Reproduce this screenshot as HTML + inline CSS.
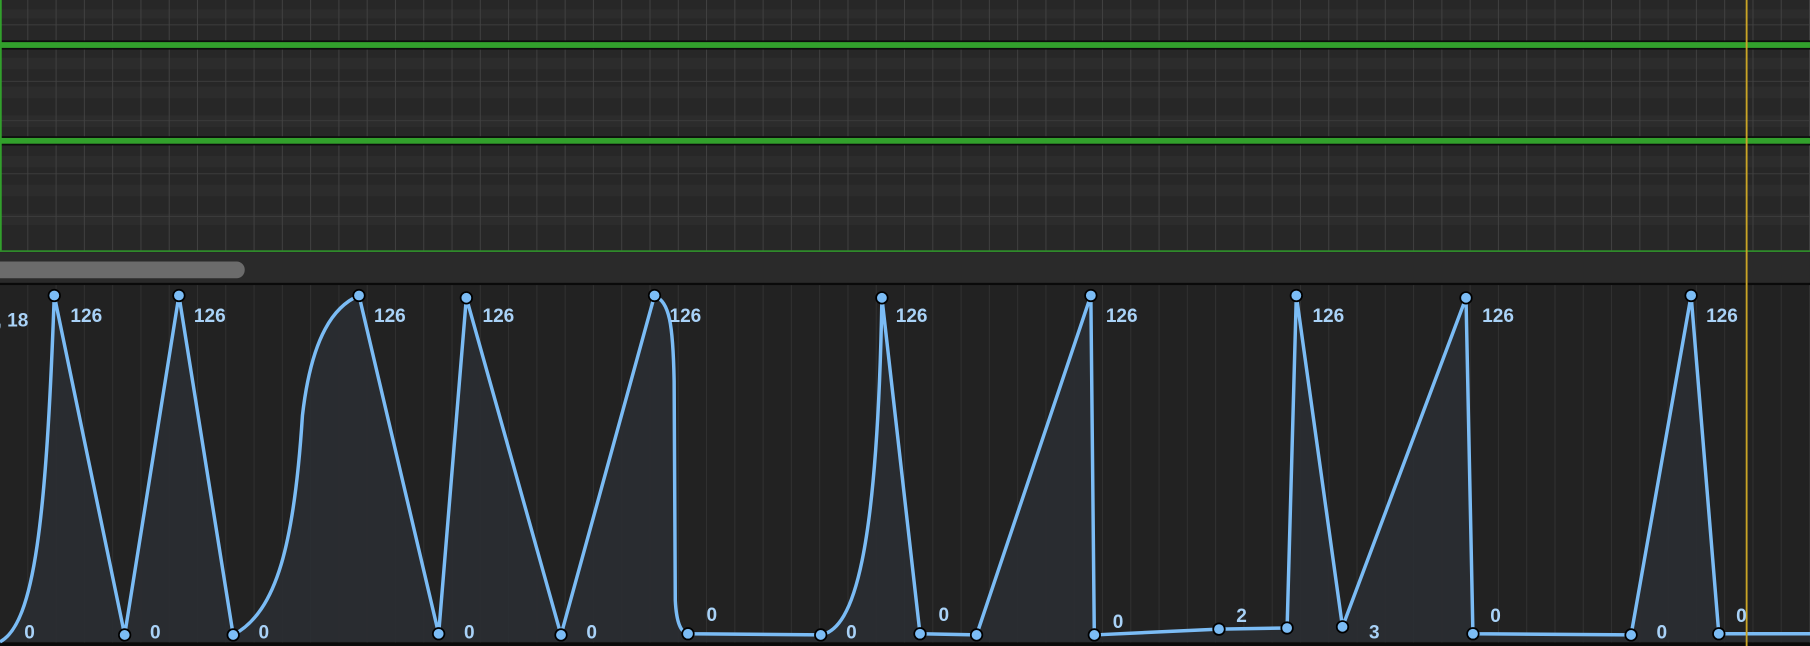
<!DOCTYPE html>
<html><head><meta charset="utf-8"><style>
html,body{margin:0;padding:0;background:#222;width:1810px;height:646px;overflow:hidden}
svg{display:block}
</style></head><body>
<svg width="1810" height="646" viewBox="0 0 1568 559.6" preserveAspectRatio="none" xmlns="http://www.w3.org/2000/svg">
<defs>
<pattern id="vg" x="0" y="0" width="24.5" height="10" patternUnits="userSpaceOnUse">
<rect x="23.7" y="0" width="1.1" height="10" fill="#424242"/>
</pattern>
<pattern id="vg2" x="0" y="0" width="24.5" height="10" patternUnits="userSpaceOnUse">
<rect x="23.7" y="0" width="1" height="10" fill="#323232"/>
</pattern>
</defs>
<rect x="0" y="0" width="1568" height="220" fill="#272727"/>
<g fill="#2c2c2c">
<rect x="0" y="8" width="1568" height="8"/><rect x="0" y="50" width="1568" height="10"/><rect x="0" y="75" width="1568" height="10"/><rect x="0" y="100" width="1568" height="10"/>
<rect x="0" y="135" width="1568" height="10"/><rect x="0" y="160" width="1568" height="10"/><rect x="0" y="185" width="1568" height="10"/>
</g>
<g fill="#3a3a3a">
<rect x="0" y="21" width="1568" height="1"/><rect x="0" y="70" width="1568" height="1"/><rect x="0" y="104" width="1568" height="1"/>
<rect x="0" y="150" width="1568" height="1"/><rect x="0" y="187" width="1568" height="1"/>
</g>
<rect x="0" y="0" width="1568" height="218" fill="url(#vg)"/>
<rect x="0" y="35" width="1568" height="8" fill="#0d0d0d"/>
<rect x="0" y="36.5" width="1568" height="5" fill="#32a02c"/>
<rect x="0" y="118" width="1568" height="8" fill="#0d0d0d"/>
<rect x="0" y="119.5" width="1568" height="5" fill="#32a02c"/>
<rect x="0" y="0" width="1.5" height="218" fill="#32a02c"/>
<path d="M0,217.5 L1568,217.5" stroke="#2f8a2a" stroke-width="1.5"/>
<rect x="0" y="219" width="1568" height="27" fill="#2a2a2a"/>
<rect x="-10" y="226.5" width="222" height="14.5" rx="7" fill="#6b6b6b"/>
<rect x="0" y="245" width="1568" height="2" fill="#0a0a0a"/>
<rect x="0" y="247" width="1568" height="310" fill="#222"/>
<rect x="0" y="247" width="1568" height="310" fill="url(#vg2)"/>
<rect x="0" y="556.5" width="1568" height="3" fill="#0a0a0a"/>
<path d="M0,556 C30,540 40,450 47,256 L108,550 L155,256 L202,550 C240,530 255,470 262,360 C270,290 290,265 311,256 L380,549 L404,258 L486,550 L567,256 C580,262 583,280 584,330 L585,520 C586,540 590,548 596,549 L711,550 C740,545 760,480 764,258 L797,549 L846,550 L945,256 L948,550 L1056,545 L1115,544 L1123,256 L1163,543 L1270,258 L1276,549 L1413,550 L1465,256 L1489,549 L1568,549 L1568,556 L0,556 Z" fill="#2a2d32" fill-opacity="0.9"/>
<path d="M0,556 C30,540 40,450 47,256 L108,550 L155,256 L202,550 C240,530 255,470 262,360 C270,290 290,265 311,256 L380,549 L404,258 L486,550 L567,256 C580,262 583,280 584,330 L585,520 C586,540 590,548 596,549 L711,550 C740,545 760,480 764,258 L797,549 L846,550 L945,256 L948,550 L1056,545 L1115,544 L1123,256 L1163,543 L1270,258 L1276,549 L1413,550 L1465,256 L1489,549 L1568,549" fill="none" stroke="#7bbcf5" stroke-width="3" stroke-linejoin="round"/>
<rect x="1512.3" y="0" width="1.6" height="559.6" fill="#c9a426"/>
<g fill="#7bbcf5" stroke="#000" stroke-width="1.5">
<circle cx="47" cy="256" r="5"/><circle cx="108" cy="550" r="5"/><circle cx="155" cy="256" r="5"/><circle cx="202" cy="550" r="5"/>
<circle cx="311" cy="256" r="5"/><circle cx="380" cy="549" r="5"/><circle cx="404" cy="258" r="5"/><circle cx="486" cy="550" r="5"/>
<circle cx="567" cy="256" r="5"/><circle cx="596" cy="549" r="5"/><circle cx="711" cy="550" r="5"/><circle cx="764" cy="258" r="5"/>
<circle cx="797" cy="549" r="5"/><circle cx="846" cy="550" r="5"/><circle cx="945" cy="256" r="5"/><circle cx="948" cy="550" r="5"/>
<circle cx="1056" cy="545" r="5"/><circle cx="1115" cy="544" r="5"/><circle cx="1123" cy="256" r="5"/><circle cx="1163" cy="543" r="5"/>
<circle cx="1270" cy="258" r="5"/><circle cx="1276" cy="549" r="5"/><circle cx="1413" cy="550" r="5"/><circle cx="1465" cy="256" r="5"/>
<circle cx="1489" cy="549" r="5"/>
</g>
<g fill="#a9d2f7" font-family="Liberation Sans, sans-serif" font-weight="bold" font-size="16.5">
<text x="-3" y="283">, 18</text>
<text x="61" y="279">126</text><text x="168" y="279">126</text><text x="324" y="279">126</text><text x="418" y="279">126</text>
<text x="580" y="279">126</text><text x="776" y="279">126</text><text x="958" y="279">126</text><text x="1137" y="279">126</text>
<text x="1284" y="279">126</text><text x="1478" y="279">126</text>
<text x="21" y="553">0</text><text x="130" y="553">0</text><text x="224" y="553">0</text><text x="402" y="553">0</text>
<text x="508" y="553">0</text><text x="612" y="538">0</text><text x="733" y="553">0</text><text x="813" y="538">0</text>
<text x="964" y="544">0</text><text x="1071" y="539">2</text><text x="1186" y="553">3</text><text x="1291" y="539">0</text>
<text x="1435" y="553">0</text><text x="1504" y="539">0</text>
</g>
</svg>
</body></html>
